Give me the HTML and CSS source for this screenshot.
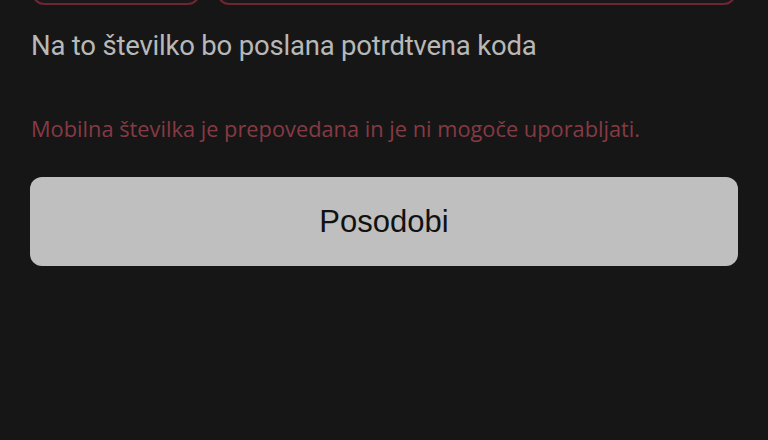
FILE: index.html
```html
<!DOCTYPE html>
<html lang="sl">
<head>
<meta charset="utf-8">
<link rel="stylesheet" href="styles.css">
</head>
<body>
<main class="form">
  <div class="phone-row">
    <div class="field field-code"></div>
    <div class="field field-number"></div>
  </div>
  <p class="hint">Na to številko bo poslana potrdtvena koda</p>
  <p class="error">Mobilna številka je prepovedana in je ni mogoče uporabljati.</p>
  <button class="submit" type="button">Posodobi</button>
</main>
</body>
</html>
```

FILE: styles.css
```css
html, body {
  margin: 0;
  padding: 0;
  background: #161616;
  height: 100%;
  overflow: hidden;
}
.form {
  padding: 0 30px;
  display: flex;
  flex-direction: column;
  font-family: Roboto, "Noto Sans", sans-serif;
}
.phone-row {
  display: flex;
  gap: 17px;
  margin-top: -45px;
  height: 50px;
  padding: 0 2px 0 2px;
}
.field {
  box-sizing: border-box;
  height: 50px;
  border: 2px solid #6e2630;
  border-radius: 12px;
  background: #1a1718;
}
.field-code { width: 168px; }
.field-number { flex: 1; }
.hint {
  margin: 24px 0 0 1px;
  font-size: 27.5px;
  line-height: 34px;
  color: #b8b8b8;
  letter-spacing: -0.2px;
}
.error {
  margin: 52px 0 0 1px;
  font-family: "Open Sans", Roboto, sans-serif;
  font-size: 21.8px;
  line-height: 28px;
  color: #863a44;
}
.submit {
  margin-top: 34px;
  height: 89px;
  border: none;
  border-radius: 12px;
  background: #bfbfbf;
  color: #111;
  font-family: "Liberation Sans", Arial, sans-serif;
  font-size: 31px;
  padding: 0;
}
```
